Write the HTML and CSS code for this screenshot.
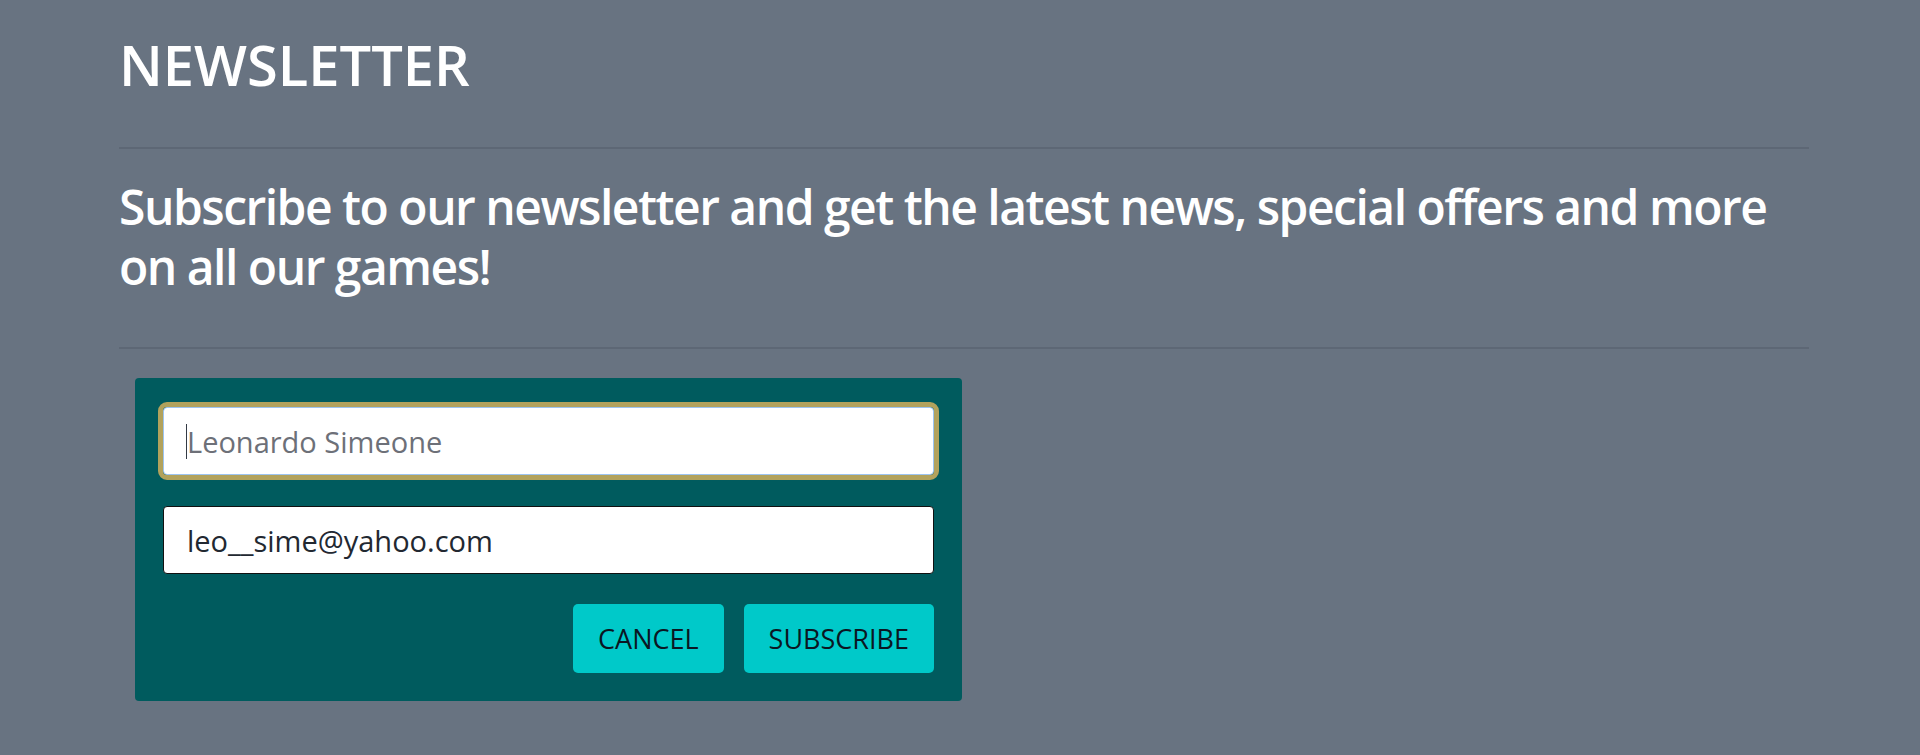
FILE: index.html
```html
<!DOCTYPE html>
<html lang="en">
<head>
<meta charset="utf-8">
<title>Newsletter</title>
<link rel="stylesheet" href="styles.css">
</head>
<body>
<main class="page">
  <h1 class="title">NEWSLETTER</h1>
  <hr class="rule">
  <p class="lead">Subscribe to our newsletter and get the latest news, special offers and more on all our games!</p>
  <hr class="rule">
  <form class="card">
    <div class="field-wrap">
      <input class="field field--focus" type="text" placeholder="Leonardo Simeone">
      <span class="caret"></span>
    </div>
    <input class="field" type="email" value="leo__sime@yahoo.com">
    <div class="actions">
      <button type="button" class="btn">CANCEL</button>
      <button type="button" class="btn">SUBSCRIBE</button>
    </div>
  </form>
</main>
</body>
</html>
```

FILE: styles.css
```css
html, body {
  margin: 0;
  padding: 0;
  background: #687381;
}
body {
  font-family: "Open Sans", "Noto Sans", sans-serif;
  color: #ffffff;
}
.page {
  margin: 0 111px 0 119px;
  padding-top: 24px;
}
.title {
  margin: 0;
  font-size: 56px;
  font-weight: 600;
  line-height: 80px;
  letter-spacing: 0;
}
.rule {
  border: 0;
  border-top: 2px solid #5d6775;
  margin: 0;
}
.title + .rule {
  margin-top: 43px;
}
.lead {
  margin: 28px 0 50px;
  font-size: 48px;
  font-weight: 600;
  line-height: 60px;
  letter-spacing: -1.5px;
}
.card {
  margin: 29px 0 0 16px;
  width: 827px;
  box-sizing: border-box;
  padding: 29px 28px 28px;
  background: #005b5e;
  border-radius: 4px;
  display: flex;
  flex-direction: column;
  gap: 31px;
}
.field-wrap {
  position: relative;
}
.caret {
  position: absolute;
  left: 23px;
  top: 17px;
  width: 1px;
  height: 35px;
  background: #333a44;
}
.field {
  display: block;
  box-sizing: border-box;
  width: 100%;
  height: 68px;
  padding: 0 23px;
  border: 1px solid #111;
  border-radius: 4px;
  background: #fff;
  font-family: "Open Sans", "Noto Sans", sans-serif;
  font-size: 29px;
  color: #222831;
  outline: none;
}
.field::placeholder {
  color: #6d7078;
}
.field--focus {
  border: 1px solid #9cc4f0;
  outline: 5px solid #b2a25c;
  outline-offset: 0;
}
.actions {
  display: flex;
  justify-content: flex-end;
  gap: 20px;
  margin-top: -1px;
}
.btn {
  height: 69px;
  padding: 0 25px;
  border: 0;
  border-radius: 5px;
  background: #00c9c9;
  color: #0b1622;
  font-family: "Open Sans", "Noto Sans", sans-serif;
  font-size: 27px;
  font-weight: 500;
}
```
